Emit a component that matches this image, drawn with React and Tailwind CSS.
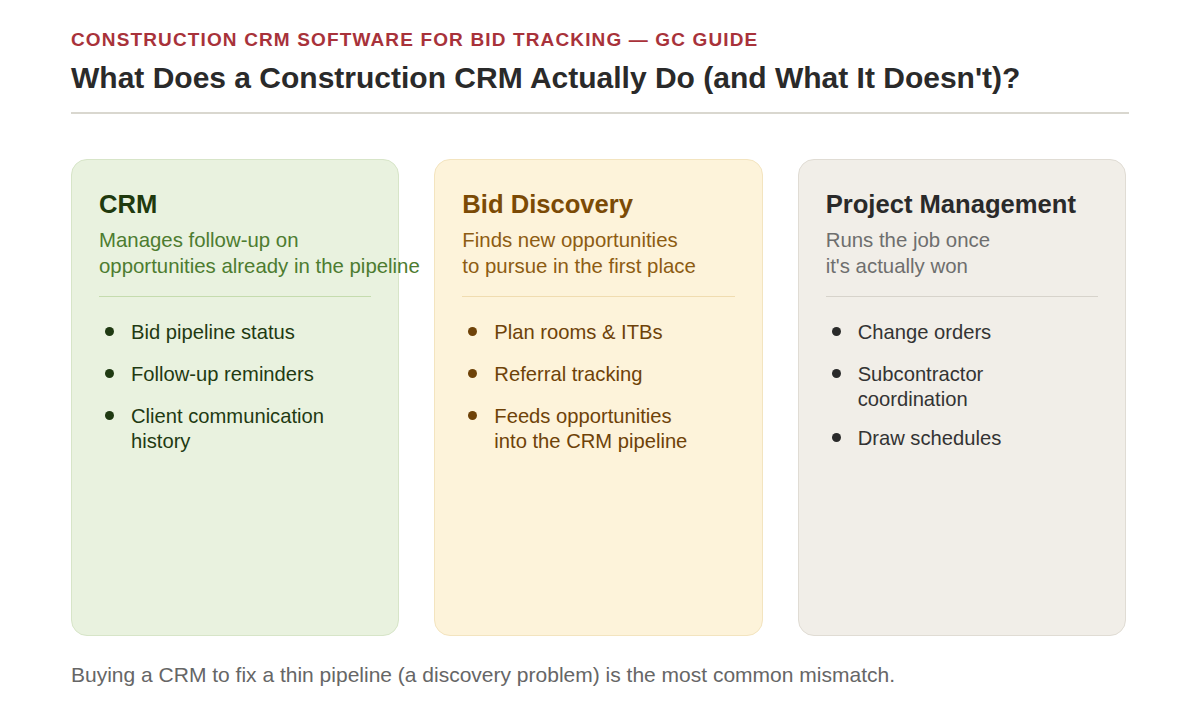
import React from 'react';

const cards = [
  {
    title: 'CRM',
    sub: ['Manages follow-up on', 'opportunities already in the pipeline'],
    items: [['Bid pipeline status'], ['Follow-up reminders'], ['Client communication', 'history']],
    box: 'bg-[#e9f2df] border-[#d7e5c8]',
    head: 'text-[#1f3a0e]',
    subC: 'text-[#4d7c30]',
    rule: 'border-[#c5dcae]',
    item: 'text-[#1f3a12]',
    dot: 'bg-[#1f3a12]',
  },
  {
    title: 'Bid Discovery',
    sub: ['Finds new opportunities', 'to pursue in the first place'],
    items: [['Plan rooms & ITBs'], ['Referral tracking'], ['Feeds opportunities', 'into the CRM pipeline']],
    box: 'bg-[#fdf3da] border-[#f3e4bf]',
    head: 'text-[#7b4a05]',
    subC: 'text-[#8d5c12]',
    rule: 'border-[#f0dcb0]',
    item: 'text-[#6e4208]',
    dot: 'bg-[#6e4208]',
  },
  {
    title: 'Project Management',
    sub: ['Runs the job once', "it's actually won"],
    items: [['Change orders'], ['Subcontractor', 'coordination'], ['Draw schedules']],
    box: 'bg-[#f1eee8] border-[#e0dcd4]',
    head: 'text-[#2a2a2a]',
    subC: 'text-[#6e6e6e]',
    rule: 'border-[#d7d3cb]',
    item: 'text-[#333333]',
    dot: 'bg-[#2a2a2a]',
  },
];

function Card({ c }) {
  return (
    <div className={`h-[477px] rounded-2xl border px-[27px] pt-[30px] ${c.box}`}>
      <h3 className={`text-[25.6px] leading-[29px] font-bold ${c.head}`}>{c.title}</h3>
      <p className={`mt-[8px] text-[20.4px] leading-[26px] whitespace-nowrap ${c.subC}`}>
        {c.sub[0]}
        <br />
        {c.sub[1]}
      </p>
      <div className={`mt-[17px] border-t ${c.rule}`}></div>
      <ul className="mt-[23px] flex flex-col gap-[15px]">
        {c.items.map((it, i) => (
          <li key={i} className={`flex min-h-[27px] text-[20.2px] leading-[24.5px] ${c.item}`}>
            <span className={`mt-[7px] ml-[6px] mr-[17px] h-[9px] w-[9px] shrink-0 rounded-full ${c.dot}`}></span>
            <span className="whitespace-nowrap">
              {it.map((line, j) => (
                <React.Fragment key={j}>
                  {j > 0 && <br />}
                  {line}
                </React.Fragment>
              ))}
            </span>
          </li>
        ))}
      </ul>
    </div>
  );
}

export default function App() {
  return (
    <div className="min-h-screen bg-white pt-7 pl-[71px]" style={{ fontFamily: '"Liberation Sans", Arial, sans-serif' }}>
      <div className="w-[1058px]">
        <div className="text-[19px] leading-[24px] font-bold tracking-[0.06em] text-[#a8323a]">
          CONSTRUCTION CRM SOFTWARE FOR BID TRACKING — GC GUIDE
        </div>
        <h1 className="mt-2 text-[30px] leading-[36px] font-bold text-[#2a2a2a]">
          What Does a Construction CRM Actually Do (and What It Doesn't)?
        </h1>
        <div className="mt-4 border-t-2 border-[#d9d7cf]"></div>
      </div>

      <div className="mt-[45px] grid w-[1055px] grid-cols-3 gap-[35px]">
        {cards.map((c) => (
          <Card key={c.title} c={c} />
        ))}
      </div>

      <p className="mt-[26px] text-[21px] leading-[26px] text-[#666666]">
        Buying a CRM to fix a thin pipeline (a discovery problem) is the most common mismatch.
      </p>
    </div>
  );
}
